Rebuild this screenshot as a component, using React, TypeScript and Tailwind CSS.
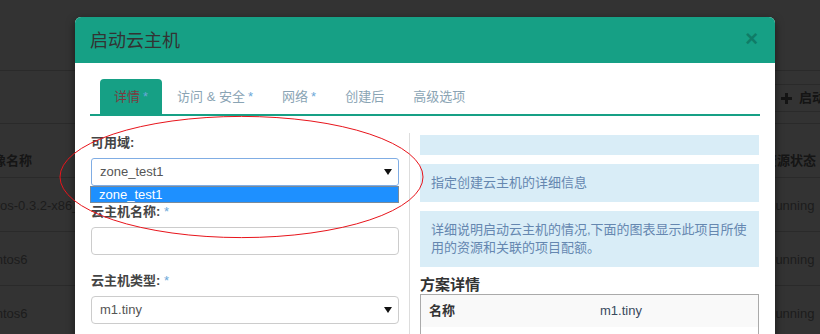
import React from "react";

function Caret() {
  return (
    <svg width="8" height="6" viewBox="0 0 8 6" className="block">
      <path d="M0 0 L8 0 L4 6 Z" fill="#111" />
    </svg>
  );
}

function Tab({ label, star, active }: { label: string; star?: boolean; active?: boolean }) {
  return (
    <div
      className={
        active
          ? "h-[35px] px-[14px] flex items-center rounded-t-[4px] bg-[#16a085] text-[#7b3b40]"
          : "h-[35px] px-[14px] flex items-center rounded-t-[4px] text-[#8aa4b4]"
      }
    >
      <span className="whitespace-nowrap">{label}</span>
      {star && <span className="ml-[3px] text-[#6aa7d8]">*</span>}
    </div>
  );
}

export default function App() {
  return (
    <div className="relative w-[820px] h-[334px] overflow-hidden bg-[#333333] font-['Liberation_Sans','Noto_Sans_CJK_SC',sans-serif] text-[13px]">
      {/* background page */}
      <div className="h-[71px] border-b border-[#2a2a2a]" />
      <div className="h-[53px] border-b border-[#2a2a2a] relative">
        <div className="absolute left-[770px] top-[13px] h-[28px] w-[120px] border border-[#2a2a2a] flex items-center pl-[10px] gap-[7px] font-bold text-[#141414]">
          <svg width="11" height="11" viewBox="0 0 11 11">
            <rect x="4" y="0" width="3" height="11" fill="#141414" />
            <rect x="0" y="4" width="11" height="3" fill="#141414" />
          </svg>
          <span className="whitespace-nowrap">启动云主机</span>
        </div>
      </div>
      <div className="h-[54px] border-b border-[#2a2a2a] relative font-bold text-[#151515]">
        <span className="absolute left-[-20px] top-[27px] whitespace-nowrap">镜像名称</span>
        <span className="absolute left-[764px] top-[27px] whitespace-nowrap">资源状态</span>
      </div>
      {["cirros-0.3.2-x86_64", "centos6", "centos6"].map((n, i) => (
        <div key={i} className="h-[54px] border-b border-[#2a2a2a] relative text-[#1c1c1c]">
          <span className="absolute left-[-18px] top-[18px] whitespace-nowrap">{n}</span>
          <span className="absolute left-[766px] top-[18px] whitespace-nowrap">Running</span>
        </div>
      ))}

      {/* modal */}
      <div className="absolute left-[75px] top-[17px] w-[700px] h-[360px] bg-white rounded-t-[6px] overflow-hidden shadow-[0_3px_9px_rgba(0,0,0,0.5)]">
        <div className="h-[46px] bg-[#16a085] px-[15px] flex items-center justify-between">
          <span className="text-[18px] text-[#333] leading-none pt-[1px]">启动云主机</span>
          <span className="text-[22px] font-bold text-[#0f7c67] leading-none mr-[2px] -mt-[2px]">×</span>
        </div>
        <div className="px-[15px] pt-[16px]">
          <div className="flex gap-[1px] pl-[10px] border-b-2 border-[#16a085]">
            <Tab label="详情" star active />
            <Tab label="访问 & 安全" star />
            <Tab label="网络" star />
            <Tab label="创建后" />
            <Tab label="高级选项" />
          </div>
          <div className="flex mt-[17px]">
            {/* left col */}
            <div className="w-[308px] ml-[1px] pt-[1px] text-[#444]">
              <div className="relative">
                <div className="h-[18px] leading-[18px] font-bold">可用域:</div>
                <div className="mt-[6px] h-[28px] border border-[#80ade4] rounded-[3px] flex items-center justify-between pl-[8px] pr-[6px] text-[#555]">
                  <span>zone_test1</span>
                  <Caret />
                </div>
                <div className="absolute left-[-1px] right-0 top-[52px] h-[17px] bg-[#1e90ff] border border-[#7a8a9a] flex items-center pl-[8px] text-white">
                  zone_test1
                </div>
              </div>
              <div className="mt-[17px] h-[18px] leading-[18px] font-bold">
                云主机名称: <span className="font-normal text-[#6aa7d8]">*</span>
              </div>
              <div className="mt-[6px] h-[28px] border border-[#ccc] rounded-[4px]" />
              <div className="mt-[17px] h-[18px] leading-[18px] font-bold">
                云主机类型: <span className="font-normal text-[#6aa7d8]">*</span>
              </div>
              <div className="mt-[6px] h-[28px] border border-[#ccc] rounded-[4px] flex items-center justify-between pl-[8px] pr-[6px] text-[#555]">
                <span>m1.tiny</span>
                <Caret />
              </div>
            </div>
            {/* separator */}
            <div className="w-px bg-[#dddddd] ml-[10px] mr-[10px] h-[300px]" />
            {/* right col */}
            <div className="w-[339px] pt-[2px]">
              <div className="h-[20px] bg-[#d9edf7]" />
              <div className="mt-[9px] bg-[#d9edf7] py-[10px] px-[11px] leading-[18px] text-[#6587b0]">
                指定创建云主机的详细信息
              </div>
              <div className="mt-[9px] bg-[#d9edf7] py-[10px] px-[11px] leading-[18px] text-[#6587b0] whitespace-nowrap">
                详细说明启动云主机的情况,下面的图表显示此项目所使
                <br />
                用的资源和关联的项目配额。
              </div>
              <div className="mt-[9px] h-[18px] leading-[18px] text-[15px] font-bold text-[#333]">方案详情</div>
              <div className="border border-[#aaaaaa] h-[100px]">
                <div className="grid grid-cols-[171px_1fr] h-[32px] bg-[#f9f9f9] items-center text-[#333]">
                  <span className="pl-[8px] font-bold">名称</span>
                  <span className="pl-[8px] text-[#3a4a5e]">m1.tiny</span>
                </div>
              </div>
            </div>
          </div>
        </div>
      </div>

      {/* red annotation ellipse */}
      <svg className="absolute left-0 top-0 pointer-events-none" width="820" height="334">
        <ellipse cx="241.5" cy="177" rx="181.5" ry="60.6" fill="none" stroke="#e8141b" strokeWidth="1" />
      </svg>
    </div>
  );
}
